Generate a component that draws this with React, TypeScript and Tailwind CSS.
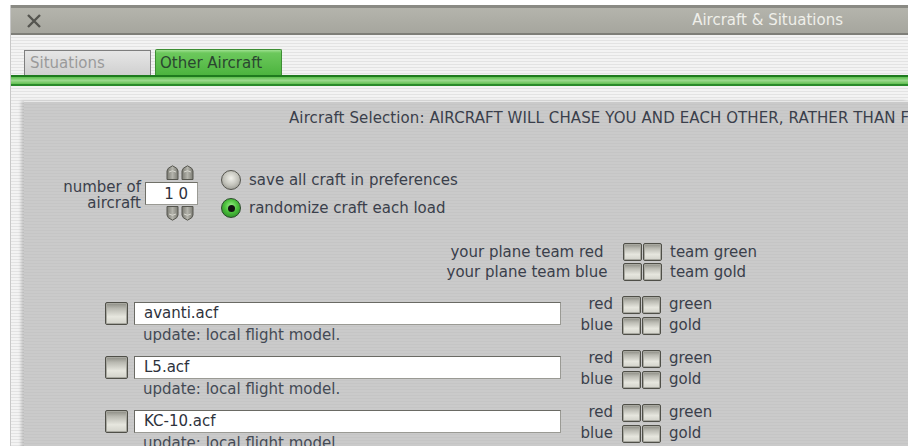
import * as React from 'react';

// Bevelled square toggle used for team colours and aircraft enable.
const Box = ({ w = 'w-[19px]', h = 'h-[18px]' }: { w?: string; h?: string }) => (
  <div
    className={`${w} ${h} border border-[#4f4f48] rounded-[2px] bg-[linear-gradient(to_bottom,#8a8a82_0%,#b8b8b0_25%,#e6e6de_65%,#d2d2ca_100%)] shadow-[inset_0_0_0_1px_#a8a8a0]`}
  />
);

const BoxPair = () => (
  <div className="flex gap-[1px]">
    <Box />
    <Box />
  </div>
);

const Radio = ({ on }: { on?: boolean }) =>
  on ? (
    <div className="w-[20px] h-[20px] rounded-full border border-[#2a4a2a] bg-[radial-gradient(circle_at_50%_40%,#9cf08c_0%,#4cc03c_45%,#1f7a1f_100%)] flex items-center justify-center">
      <div className="w-[7px] h-[7px] rounded-full bg-[#111]" />
    </div>
  ) : (
    <div className="w-[20px] h-[20px] rounded-full border border-[#55554e] bg-[radial-gradient(circle_at_50%_40%,#f0f0ea_0%,#c4c4bc_50%,#85857e_100%)]" />
  );

const Arrow = ({ down }: { down?: boolean }) => (
  <svg width="13" height="15" viewBox="0 0 13 15" className={down ? 'rotate-180' : ''}>
    <defs>
      <linearGradient id="arr" x1="0" y1="0" x2="1" y2="0">
        <stop offset="0" stopColor="#7c7c74" />
        <stop offset="0.5" stopColor="#b4b4ac" />
        <stop offset="1" stopColor="#7c7c74" />
      </linearGradient>
    </defs>
    <path d="M1 14.5 V6 Q1 3 6.5 0.8 Q12 3 12 6 V14.5 Z" fill="url(#arr)" stroke="#55554e" strokeWidth="1" />
    <path d="M3 7 Q6.5 4.5 10 7" fill="none" stroke="#d8d8d0" strokeWidth="1" />
  </svg>
);

const TeamRow = ({ label, right }: { label: string; right: string }) => (
  <div className="flex items-center h-[20px]">
    <div className="w-[180px] text-center whitespace-nowrap">{label}</div>
    <div className="ml-[6px]">
      <BoxPair />
    </div>
    <div className="ml-[8px] whitespace-nowrap">{right}</div>
  </div>
);

const AircraftRow = ({ file }: { file: string }) => (
  <div className="flex h-[54px]">
    <div className="ml-[81px] mt-[8px]">
      <Box w="w-[23px]" h="h-[23px]" />
    </div>
    <div className="ml-[6px] mt-[8px] flex flex-col">
      <div className="w-[427px] h-[23px] bg-white border border-[#9a9a94] border-t-[#6a6a64] border-l-[#6a6a64] flex items-center pl-[9px] text-[#2e323c]">
        {file}
      </div>
      <div className="pl-[9px] mt-[2px] leading-[16px] text-[#444a55] whitespace-nowrap">update: local flight model.</div>
    </div>
    <div className="flex flex-col ml-[5px]">
      <div className="flex items-center h-[21px]">
        <div className="w-[47px] text-right">red</div>
        <div className="ml-[9px]">
          <BoxPair />
        </div>
        <div className="ml-[8px]">green</div>
      </div>
      <div className="flex items-center h-[21px]">
        <div className="w-[47px] text-right">blue</div>
        <div className="ml-[9px]">
          <BoxPair />
        </div>
        <div className="ml-[8px]">gold</div>
      </div>
    </div>
  </div>
);

export default function App() {
  return (
    <div className="w-[908px] h-[446px] bg-white overflow-hidden pt-[5px] pl-[10px] font-['DejaVu_Sans',sans-serif] text-[15px] text-[#3a3f4b]">
      <div className="h-full flex flex-col border-l border-[#c8c8c8]">
        {/* title bar */}
        <div className="h-[30px] shrink-0 flex items-center justify-between bg-[linear-gradient(to_bottom,#b4b4ac,#a6a69e)] border-t-[3px] border-t-[#8a8a84] border-b-2 border-b-[#7e7e78]">
          <svg width="16" height="14" viewBox="0 0 16 14" className="ml-[15px]">
            <path d="M2 1 L14 13 M14 1 L2 13" stroke="#555550" strokeWidth="2.4" />
          </svg>
          <div className="mr-[65px] text-[#efefea]">Aircraft &amp; Situations</div>
        </div>

        <div className="flex-1 flex flex-col bg-[repeating-linear-gradient(to_bottom,#f3f3f3_0px,#f3f3f3_2px,#e3e3e3_2px,#e3e3e3_3px)]">
          {/* tabs */}
          <div className="flex items-end h-[40px] pl-[13px] gap-[4px]">
            <div className="w-[127px] h-[25px] border border-[#7e7e7e] border-b-0 bg-[linear-gradient(to_bottom,#e6e6e6,#d0d0d0)] text-[#9a9a9a] pl-[5px] leading-[24px]">
              Situations
            </div>
            <div className="w-[127px] h-[26px] border border-[#3e8e34] border-b-0 rounded-t-[2px] bg-[linear-gradient(to_bottom,#9ee090_0px,#6cc85c_3px,#4cb43e_100%)] text-[#2a4630] pl-[4px] leading-[26px] whitespace-nowrap">
              Other Aircraft
            </div>
          </div>
          <div className="h-[11px] border-t-2 border-t-[#1e7a1e] border-b-2 border-b-[#2a8a2a] bg-[linear-gradient(to_bottom,#5cbf4c,#9ad88c_50%,#62c052)]" />

          {/* panel */}
          <div className="flex-1 ml-[13px] mt-[15px] overflow-hidden border-t border-t-[#e8e8e8] shadow-[-3px_0_3px_rgba(0,0,0,0.18)] bg-[repeating-linear-gradient(to_bottom,#cacaca_0px,#cacaca_2px,#c5c5c5_2px,#c5c5c5_3px)]">
            <div className="pt-[6px] pl-[265px] leading-[20px] whitespace-nowrap tracking-[0.1px]">
              Aircraft Selection: AIRCRAFT WILL CHASE YOU AND EACH OTHER, RATHER THAN FLYING
            </div>

            <div className="flex mt-[37px]">
              <div className="w-[117px] mt-[14px] text-right leading-[16px]">
                <div>number of</div>
                <div>aircraft</div>
              </div>
              <div className="ml-[4px] flex flex-col items-center w-[53px]">
                <div className="flex gap-[2px] ml-[16px]">
                  <Arrow />
                  <Arrow />
                </div>
                <div className="w-[53px] h-[23px] mt-[2px] bg-white border border-[#9a9a94] border-t-[#707068] border-l-[#707068] text-right pr-[9px] leading-[22px] text-[#2e323c]">
                  1 0
                </div>
                <div className="flex gap-[2px] ml-[16px] mt-[1px]">
                  <Arrow down />
                  <Arrow down />
                </div>
              </div>
              <div className="ml-[23px] mt-[4px] flex flex-col gap-[6px]">
                <div className="flex items-center gap-[8px] h-[22px]">
                  <Radio />
                  <span>save all craft in preferences</span>
                </div>
                <div className="flex items-center gap-[8px] h-[22px]">
                  <Radio on />
                  <span>randomize craft each load</span>
                </div>
              </div>
            </div>

            <div className="ml-[413px] mt-[21px]">
              <TeamRow label="your plane team red" right="team green" />
              <TeamRow label="your plane team blue" right="team gold" />
            </div>

            <div className="mt-[12px]">
              <AircraftRow file="avanti.acf" />
              <AircraftRow file="L5.acf" />
              <AircraftRow file="KC-10.acf" />
            </div>
          </div>
        </div>
      </div>
    </div>
  );
}
